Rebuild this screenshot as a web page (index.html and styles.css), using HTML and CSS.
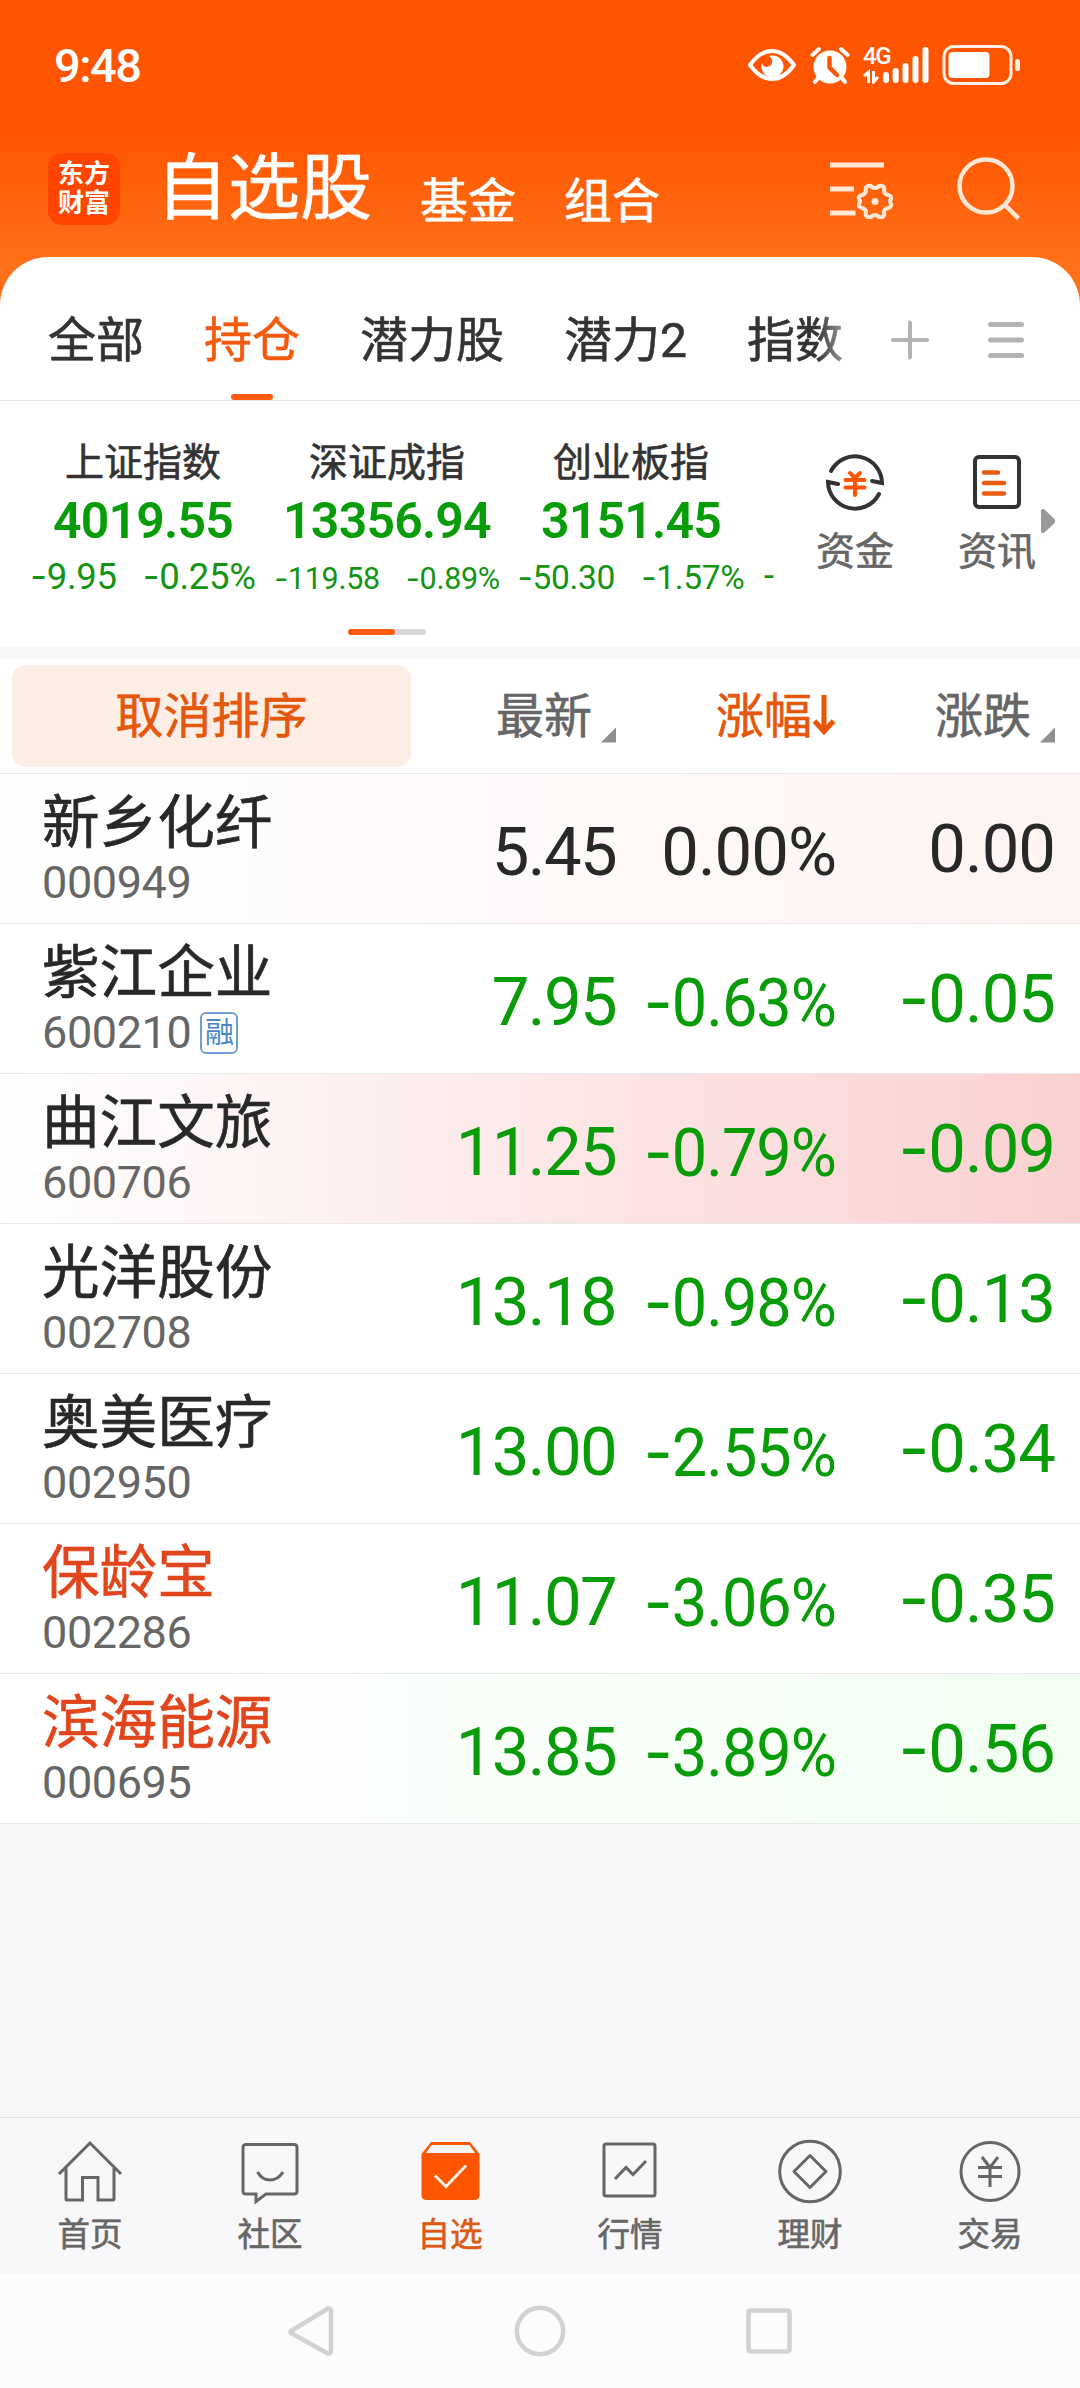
FILE: index.html
```html
<!DOCTYPE html>
<html lang="zh-CN">
<head>
    <meta charset="UTF-8">
    <meta name="viewport" content="width=device-width, initial-scale=1.0">
    <title>自选股</title>
    <link rel="stylesheet" href="styles.css">
</head>
<body>
    <header class="top">
        <div class="status">
            <span class="time">9:48</span>
            <div class="status-icons">
                <svg class="eye" width="50" height="36" viewBox="0 0 50 36">
                    <path d="M3 18 Q13 4 25 4 T47 18 Q37 32 25 32 T3 18Z" fill="none" stroke="#fff" stroke-width="4" stroke-linejoin="round"/>
                    <path d="M22 9 A11 11 0 1 1 15 16 Q16 20 20 20 Q26 19 25 13 Q24 10 22 9Z" fill="#fff"/>
                </svg>
                <svg class="alarm" width="40" height="38" viewBox="0 0 40 38">
                    <circle cx="20" cy="21" r="16.500" fill="#fff"/>
                    <path d="M2.500 9L9 3M37.500 9L31 3M8 32L5 36M32 32L35 36" stroke="#fff" stroke-width="4" stroke-linecap="round"/>
                    <path d="M19.500 12V21.500L27 29" fill="none" stroke="#ff5500" stroke-width="4.500" stroke-linecap="round" stroke-linejoin="round"/>
                </svg>
                <div class="signal">
                    <span class="net">4G</span>
                    <svg width="66" height="38" viewBox="0 0 66 38">
                        <path d="M5.500 37V26L1 30M10.500 25V36L15 31" fill="none" stroke="#fff" stroke-width="3"/>
                        <path d="M23 29V34M32.700 25V34M42.500 20V34M52.500 13V34M62.500 4V34" stroke="#fff" stroke-width="6" stroke-linecap="round"/>
                    </svg>
                </div>
                <svg class="battery" width="80" height="42" viewBox="0 0 80 42">
                    <rect x="2" y="2.500" width="67" height="37" rx="10" fill="none" stroke="#ffefe4" stroke-width="3"/>
                    <rect x="6.500" y="8" width="41" height="26" rx="4" fill="#fff"/>
                    <rect x="73" y="15" width="5" height="12" rx="2.500" fill="#ffefe4"/>
                </svg>
            </div>
        </div>
        <div class="app-bar">
            <div class="logo">东方<br>财富</div>
            <h1>自选股</h1>
            <span class="sub">基金</span>
            <span class="sub">组合</span>
            <svg class="manage" width="66" height="60" viewBox="0 0 66 60" fill="none" stroke="#ffe6d5" stroke-width="5">
                <path d="M1 6H55M1 30H25M1 54H26.500"/>
                <path stroke-width="4" stroke-linejoin="round" d="M39 27Q42 26 43 28Q46 30 49 28Q50 26 53 27Q56 28 55 31Q55 35 59 36Q63 37 62 40Q60 42 62 45Q63 48 59 49Q55 50 55 53Q56 57 53 58Q50 59 49 57Q46 55 43 57Q42 59 39 58Q36 57 37 53Q37 50 33 49Q29 48 30 45Q32 42 30 40Q29 37 33 36Q37 35 37 31Q36 28 39 27Z"/>
                <circle cx="46" cy="42.500" r="3.500" fill="#ffe6d5" stroke="none"/>
            </svg>
            <svg class="search" width="66" height="66" viewBox="0 0 66 66" fill="none" stroke="#ffe6d5" stroke-width="4.500">
                <circle cx="30" cy="30" r="26.500"/>
                <path d="M49 49L62.500 62.500"/>
            </svg>
        </div>
    </header>

    <main class="sheet">
        <nav class="tabs">
            <div class="tab-list">
                <a>全部</a>
                <a class="active">持仓</a>
                <a>潜力股</a>
                <a>潜力2</a>
                <a>指数</a>
            </div>
            <svg width="40" height="40" viewBox="0 0 40 40" stroke="#b3b3b3" stroke-width="4" stroke-linecap="round">
                <path d="M20 2.500V37.500M3 20H37"/>
            </svg>
            <svg class="burger" width="36" height="40" viewBox="0 0 36 40" stroke="#b3b3b3" stroke-width="5" stroke-linecap="round">
                <path d="M2.500 4.500H33.500M2.500 20H33.500M2.500 35.500H33.500"/>
            </svg>
        </nav>

        <section class="market">
            <div class="index-list">
                <div class="index">
                    <span class="index-name">上证指数</span>
                    <b>4019.55</b>
                    <div class="delta"><span><i>-</i>9.95</span><span><i>-</i>0.25%</span></div>
                </div>
                <div class="index">
                    <span class="index-name">深证成指</span>
                    <b>13356.94</b>
                    <div class="delta small"><span><i>-</i>119.58</span><span><i>-</i>0.89%</span></div>
                </div>
                <div class="index">
                    <span class="index-name">创业板指</span>
                    <b>3151.45</b>
                    <div class="delta medium"><span><i>-</i>50.30</span><span><i>-</i>1.57%</span></div>
                </div>
                <div class="index next">
                    <div class="delta">-</div>
                </div>
            </div>
            <div class="tool">
                <svg width="62" height="62" viewBox="0 0 62 62" fill="none" stroke="#333" stroke-width="4" stroke-linecap="round">
                    <path d="M7 20A27 27 0 0 1 58 32L48 30"/>
                    <path d="M55 43A27 27 0 0 1 4 31L14 33"/>
                    <path d="M26 22L31 27L36 22M21.500 29H40.500M21.500 36.500H40.500M31 28V44" stroke="#ff5500"/>
                </svg>
                <span>资金</span>
            </div>
            <div class="tool">
                <svg width="62" height="62" viewBox="0 0 62 62" fill="none" stroke="#333" stroke-width="4" stroke-linecap="round">
                    <rect x="9" y="6" width="44" height="50" rx="4"/>
                    <path d="M18 21.500H32M18 32H38M18 42.500H38" stroke="#e85c10" stroke-width="4.500"/>
                </svg>
                <span>资讯</span>
            </div>
            <svg class="more" width="16" height="26" viewBox="0 0 16 26">
                <path d="M1 2Q3 0 5 2L14.500 11Q16 13 14.500 15L5 24Q3 26 1 24Z" fill="#999"/>
            </svg>
        </section>
        <div class="pager"><span></span></div>
    </main>

    <section class="stocks">
        <div class="head">
            <button>取消排序</button>
            <span class="col-price">最新<em></em></span>
            <span class="col-pct sorted">涨幅<svg width="24" height="44" viewBox="0 0 24 44" fill="none" stroke="#ea5504" stroke-width="5"><path d="M12 2V38M2.500 28L12 38.500L21.500 28"/></svg></span>
            <span class="col-diff">涨跌<em></em></span>
        </div>
        <div class="row flat flash-light">
            <div class="stock"><span class="name">新乡化纤</span><span class="code">000949</span></div>
            <span class="col-price">5.45</span>
            <span class="col-pct">0.00%</span>
            <span class="col-diff">0.00</span>
        </div>
        <div class="row">
            <div class="stock"><span class="name">紫江企业</span><span class="code">600210<small>融</small></span></div>
            <span class="col-price">7.95</span>
            <span class="col-pct"><i>-</i>0.63%</span>
            <span class="col-diff"><i>-</i>0.05</span>
        </div>
        <div class="row flash-red">
            <div class="stock"><span class="name">曲江文旅</span><span class="code">600706</span></div>
            <span class="col-price">11.25</span>
            <span class="col-pct"><i>-</i>0.79%</span>
            <span class="col-diff"><i>-</i>0.09</span>
        </div>
        <div class="row">
            <div class="stock"><span class="name">光洋股份</span><span class="code">002708</span></div>
            <span class="col-price">13.18</span>
            <span class="col-pct"><i>-</i>0.98%</span>
            <span class="col-diff"><i>-</i>0.13</span>
        </div>
        <div class="row">
            <div class="stock"><span class="name">奥美医疗</span><span class="code">002950</span></div>
            <span class="col-price">13.00</span>
            <span class="col-pct"><i>-</i>2.55%</span>
            <span class="col-diff"><i>-</i>0.34</span>
        </div>
        <div class="row">
            <div class="stock"><span class="name hot">保龄宝</span><span class="code">002286</span></div>
            <span class="col-price">11.07</span>
            <span class="col-pct"><i>-</i>3.06%</span>
            <span class="col-diff"><i>-</i>0.35</span>
        </div>
        <div class="row flash-green">
            <div class="stock"><span class="name hot">滨海能源</span><span class="code">000695</span></div>
            <span class="col-price">13.85</span>
            <span class="col-pct"><i>-</i>3.89%</span>
            <span class="col-diff"><i>-</i>0.56</span>
        </div>
    </section>

    <nav class="tab-bar">
        <a>
            <svg width="68" height="68" viewBox="0 0 68 68">
                <path d="M3 36L34 5L65 36M10 30V61Q10 62 11 62H26.500V39.500H42V62H57Q58 62 58 61V30"/>
            </svg>
            首页
        </a>
        <a>
            <svg width="68" height="68" viewBox="0 0 68 68">
                <path d="M10 6.500H58Q61 6.500 61 9.500V53Q61 56 58 56H30L20 63.500V56H10Q7 56 7 53V9.500Q7 6.500 10 6.500Z"/>
                <path d="M21.500 34Q26 42 34 42T47 34"/>
            </svg>
            社区
        </a>
        <a class="active">
            <svg width="68" height="68" viewBox="0 0 68 68">
                <path d="M5.500 16L15 4H54L63.500 16V57Q63.500 62 58.500 62H10.500Q5.500 62 5.500 57Z" fill="#ff5500" stroke="none"/>
                <path d="M15.500 7H53.500L59 15H10Z" fill="#f8f8fa" stroke="none"/>
                <path d="M19 37.500L30 48.500L50 27.500" stroke="#ffeee2"/>
            </svg>
            自选
        </a>
        <a>
            <svg width="68" height="68" viewBox="0 0 68 68">
                <rect x="8" y="6" width="51" height="52" rx="2"/>
                <path d="M19 41L30 29.500L37 36.500L50 23"/>
            </svg>
            行情
        </a>
        <a>
            <svg width="68" height="68" viewBox="0 0 68 68">
                <circle cx="34" cy="33.500" r="30.300"/>
                <path d="M34 17.500L50 33.500L34 49.500L18 33.500Z" stroke-linejoin="round"/>
            </svg>
            理财
        </a>
        <a>
            <svg width="68" height="68" viewBox="0 0 68 68">
                <circle cx="34" cy="33.500" r="29"/>
                <path d="M26 19L34 29.500L42 19M22 29.500H46M22 38.500H46M34 29V49"/>
            </svg>
            交易
        </a>
    </nav>

    <footer class="system-nav">
        <svg width="52" height="52" viewBox="0 0 52 52"><path d="M6 26L43 3.500Q46 3 46 6V46Q46 49 43 48.500L6 28Q4.500 27 6 26Z"/></svg>
        <svg width="52" height="52" viewBox="0 0 52 52"><circle cx="26" cy="26" r="23.200"/></svg>
        <svg width="52" height="52" viewBox="0 0 52 52"><rect x="5.500" y="5.500" width="41" height="41" rx="2"/></svg>
    </footer>
</body>
</html>
```
FILE: styles.css
```css
* {
    box-sizing: border-box;
}
body {
    display: flex;
    flex-direction: column;
    width: 1080px;
    height: 2388px;
    margin: 0;
    overflow: hidden;
    background-color: #f6f7f9;
    font-family: Roboto, "Noto Sans CJK SC", sans-serif;
    color: #333;
}
svg {
    display: block;
    flex: none;
}
/* wider minus sign than the one Roboto has */
i {
    font-family: Inter, sans-serif;
    font-style: normal;
}
/* a little heavier than regular */
h1, .sub, .tab-list, .index-name, .tool, .head, .name, .tab-bar {
    -webkit-text-stroke: 0.6px currentColor;
}
.top {
    height: 305px;
    flex: none;
    background: linear-gradient(#ff5500 135px, #ff7019 262px);
    color: #fff;
}
.status {
    display: flex;
    justify-content: space-between;
    align-items: center;
    height: 130px;
    padding: 0 58px 0 54px;
}
.time {
    font-size: 47px;
    font-weight: 500;
    letter-spacing: -1.5px;
}
.status-icons {
    display: flex;
    align-items: center;
}
.alarm {
    margin-left: 13px;
}
.signal {
    position: relative;
    margin: 0 13px 0 13px;
}
.net {
    position: absolute;
    top: -2px;
    left: 0;
    font-size: 24px;
    line-height: 24px;
    font-weight: 500;
    letter-spacing: -1.5px;
}
.app-bar {
    display: flex;
    align-items: center;
    height: 127px;
    padding: 0 58px 9px 48px;
}
.logo {
    width: 72px;
    height: 72px;
    padding-top: 7px;
    border-radius: 14px;
    background-color: #ff4500;
    font-size: 26px;
    line-height: 29px;
    font-weight: 700;
    text-align: center;
}
h1 {
    margin: 0 0 0 36px;
    font-size: 72px;
    line-height: 80px;
    font-weight: 400;
}
.sub {
    margin: 25px 0 0 48px;
    font-size: 48px;
    line-height: 50px;
}
.manage {
    margin-left: auto;
}
.search {
    margin-left: 61px;
}
.sheet {
    height: 390px;
    margin-top: -48px;
    flex: none;
    border-radius: 48px 48px 0 0;
    background-color: #fff;
}
.tabs {
    display: flex;
    align-items: center;
    height: 144px;
    padding: 22px 56px 0 48px;
    border-bottom: 1px solid #e4e4e4;
}
.tab-list {
    display: flex;
    gap: 60px;
    width: 799px;
    margin-right: 44px;
    padding-top: 3px;
    font-size: 48px;
    line-height: 120px;
    -webkit-mask-image: linear-gradient(90deg, #000 768px, rgba(0, 0, 0, 0.45) 799px);
    mask-image: linear-gradient(90deg, #000 768px, rgba(0, 0, 0, 0.45) 799px);
}
.tab-list a {
    position: relative;
}
.tab-list .active {
    color: #f45a0d;
}
.tab-list .active::after {
    content: "";
    position: absolute;
    bottom: 1px;
    left: 27px;
    width: 42px;
    height: 6px;
    border-radius: 3px;
    background-color: #ff5a0c;
}
.burger {
    margin-left: 58px;
}
.market {
    display: flex;
    height: 228px;
    padding-left: 21px;
}
.index-list {
    display: flex;
    width: 753px;
    margin-right: 10px;
    overflow: hidden;
}
.index {
    display: flex;
    flex-direction: column;
    align-items: center;
    flex: none;
    width: 244px;
    padding-top: 37px;
}
.index-name {
    font-size: 39px;
    line-height: 50px;
}
.index b {
    font-size: 50px;
    line-height: 66px;
    font-weight: 600;
    letter-spacing: -0.8px;
    color: #089c08;
}
.delta {
    display: flex;
    align-items: baseline;
    gap: 26px;
    font-size: 36.5px;
    line-height: 45px;
    letter-spacing: -0.3px;
    white-space: nowrap;
    color: #149414;
}
.delta.small {
    font-size: 30.5px;
    line-height: 48px;
}
.delta.medium {
    font-size: 33.5px;
    line-height: 47px;
}
.index.next {
    align-items: flex-start;
    width: 30px;
    padding: 152px 0 0 11px;
}
.tool {
    display: flex;
    flex-direction: column;
    align-items: center;
    width: 142px;
    padding-top: 50px;
    font-size: 39px;
    line-height: 78px;
    color: #666;
}
.more {
    margin: 107px 0 0 -28px;
}
.pager {
    width: 78px;
    height: 6px;
    margin: 0 0 0 348px;
    border-radius: 3px;
    background-color: #d3d7da;
}
.pager span {
    display: block;
    width: 47px;
    height: 6px;
    border-radius: 3px;
    background-color: #f75a0c;
}
.stocks {
    flex: none;
    margin-top: 12px;
    background-color: #fff;
}
.head, .row {
    display: grid;
    grid-template-columns: 411px 205px 220px 219px;
    align-items: center;
    border-bottom: 1px solid #e9e9eb;
    white-space: nowrap;
}
.head {
    height: 115px;
    font-size: 48px;
    color: #666;
}
.head button {
    height: 102px;
    margin-left: 12px;
    padding-bottom: 9px;
    border: none;
    border-radius: 14px;
    background-color: #fdeee5;
    font: inherit;
    color: #e4570c;
    -webkit-text-stroke: inherit;
}
.head span {
    display: flex;
    justify-content: flex-end;
    align-items: center;
    padding-bottom: 8px;
}
.head em {
    width: 15px;
    height: 15px;
    margin: 46px 0 0 9px;
    background-color: #8e8e93;
    clip-path: polygon(100% 0, 100% 100%, 0 100%);
}
.head svg {
    margin-top: 6px;
}
.head .sorted {
    color: #e4570c;
}
.row {
    height: 150px;
    font-size: 67px;
    line-height: 80px;
    letter-spacing: -1px;
    color: #089c08;
    text-align: right;
}
.stock {
    display: flex;
    flex-direction: column;
    padding-left: 42px;
    text-align: left;
    letter-spacing: 0;
}
.name {
    font-size: 57.6px;
    line-height: 71px;
    color: #282828;
}
.name.hot {
    color: #e2451c;
}
.code {
    display: flex;
    align-items: center;
    font-size: 45px;
    line-height: 48px;
    letter-spacing: -0.4px;
    margin-bottom: 3px;
    color: #666;
}
.code small {
    width: 38px;
    height: 42px;
    margin-left: 9px;
    border: 2px solid #6fa0d4;
    border-radius: 6px;
    font-size: 29px;
    line-height: 38px;
    text-align: center;
    color: #4a86c8;
}
.row .col-price {
    padding-top: 7px;
    letter-spacing: -1.6px;
}
.row .col-pct {
    padding-top: 7px;
    transform: scaleX(0.94);
    transform-origin: right;
}
.flat .col-pct {
    transform: none;
}
.flat {
    color: #282828;
}
.flash-light {
    background: linear-gradient(90deg, #fff, #fef4f2);
}
.flash-red {
    background: linear-gradient(90deg, #fff, #fad1d1);
}
.flash-green {
    background: linear-gradient(90deg, #fff 10%, #f2fef2);
}
.tab-bar {
    display: flex;
    height: 157px;
    margin-top: auto;
    flex: none;
    border-top: 1px solid #e2e2e4;
    background-color: #f8f8fa;
}
.tab-bar a {
    display: flex;
    flex-direction: column;
    align-items: center;
    width: 180px;
    padding-top: 20px;
    font-size: 32.5px;
    line-height: 58px;
    color: #666;
}
.tab-bar svg {
    fill: none;
    stroke: #666;
    stroke-width: 3;
}
.tab-bar .active {
    color: #dc5a14;
}
.system-nav {
    display: flex;
    justify-content: center;
    gap: 177px;
    height: 114px;
    padding-top: 31px;
    flex: none;
    background-color: #fcfcfc;
}
.system-nav svg {
    fill: none;
    stroke: #d2d2d2;
    stroke-width: 4.5;
}
```
